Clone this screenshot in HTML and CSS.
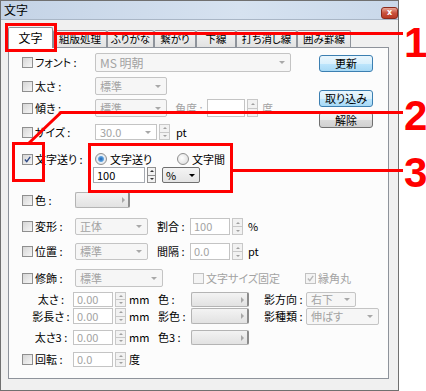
FILE: index.html
```html
<!DOCTYPE html>
<html lang="ja">

<head>
  <meta charset="UTF-8">
  <title>文字</title>
  <link rel="stylesheet" href="styles.css">
</head>

<body>
  <div id="window">
    <div class="titlebar">
      <span class="title">文字</span>
      <span class="close">x</span>
    </div>

    <div class="client">
      <div class="tabs">
        <span class="tab active t-moji">文字</span>
        <span class="tab t-kumi">組版処理</span>
        <span class="tab t-furi">ふりがな</span>
        <span class="tab t-tsuna">繋がり</span>
        <span class="tab t-kasen">下線</span>
        <span class="tab t-uchi">打ち消し線</span>
        <span class="tab t-kakomi">囲み罫線</span>
      </div>

      <div class="panel">
        <div class="top">
          <div class="rows">
            <div class="row r-font">
              <span class="cb"></span>
              <span class="lbl">フォント :</span>
              <span class="combo c-font">MS 明朝<i class="arrow"></i></span>
            </div>
            <div class="row r-bold">
              <span class="cb"></span>
              <span class="lbl">太さ :</span>
              <span class="combo c-short">標準<i class="arrow"></i></span>
            </div>
            <div class="row r-slant">
              <span class="cb"></span>
              <span class="lbl">傾き :</span>
              <span class="combo c-short">標準<i class="arrow"></i></span>
              <span class="lbl dim l-angle">角度 :</span>
              <span class="field f-angle"></span>
              <span class="spin"><i class="up"></i><i class="down"></i></span>
              <span class="unit dim">度</span>
            </div>
            <div class="row r-size">
              <span class="cb"></span>
              <span class="lbl">サイズ :</span>
              <span class="combo c-edit">30.0<i class="arrow"></i></span>
              <span class="spin"><i class="up"></i><i class="down"></i></span>
              <span class="unit u-pt">pt</span>
            </div>
          </div>
          <div class="buttons">
            <span class="btn hot b-update">更新</span>
            <span class="btn hot b-import">取り込み</span>
            <span class="btn b-clear">解除</span>
          </div>
        </div>

        <div class="row r-track">
          <span class="cb on"><svg viewBox="0 0 11 11"><path d="M2.3 5.6 L4.6 8.2 L8.8 2.4"/></svg></span>
          <span class="lbl">文字送り :</span>
          <span class="choice ch-first"><span class="radio on"></span>文字送り</span>
          <span class="choice"><span class="radio"></span>文字間</span>
        </div>
        <div class="row r-value">
          <span class="field f-value live">100</span>
          <span class="spin s-value"><i class="up"></i><i class="down"></i></span>
          <span class="select">%<i class="arrow"></i></span>
        </div>

        <div class="row r-color">
          <span class="cb"></span>
          <span class="lbl sm">色 :</span>
          <span class="swatch s-main"><i class="arrow"></i></span>
        </div>
        <div class="row r-shape">
          <span class="cb"></span>
          <span class="lbl sm">変形 :</span>
          <span class="combo c-mid">正体<i class="arrow"></i></span>
          <span class="lbl l-mid">割合 :</span>
          <span class="field">100</span>
          <span class="spin"><i class="up"></i><i class="down"></i></span>
          <span class="unit u-pct">%</span>
        </div>
        <div class="row r-pos">
          <span class="cb"></span>
          <span class="lbl sm">位置 :</span>
          <span class="combo c-mid">標準<i class="arrow"></i></span>
          <span class="lbl l-mid">間隔 :</span>
          <span class="field">0.0</span>
          <span class="spin"><i class="up"></i><i class="down"></i></span>
          <span class="unit u-pct">pt</span>
        </div>
        <div class="row r-deco">
          <span class="cb"></span>
          <span class="lbl sm">修飾 :</span>
          <span class="combo c-long">標準<i class="arrow"></i></span>
          <span class="choice ch-fixed"><span class="cb off"></span>文字サイズ固定</span>
          <span class="choice dim"><span class="cb off on"><svg viewBox="0 0 11 11"><path d="M2.3 5.6 L4.6 8.2 L8.8 2.4"/></svg></span>縁角丸</span>
        </div>

        <div class="row sub r-width">
          <span class="lbl sub-lbl">太さ :</span>
          <span class="field">0.00</span>
          <span class="spin"><i class="up"></i><i class="down"></i></span>
          <span class="unit u-mm">mm</span>
          <span class="lbl l-mid">色 :</span>
          <span class="swatch"><i class="arrow"></i></span>
          <span class="lbl l-shadow">影方向 :</span>
          <span class="combo c-dir">右下<i class="arrow"></i></span>
        </div>
        <div class="row sub r-len">
          <span class="lbl sub-lbl">影長さ :</span>
          <span class="field">0.00</span>
          <span class="spin"><i class="up"></i><i class="down"></i></span>
          <span class="unit u-mm">mm</span>
          <span class="lbl l-mid">影色 :</span>
          <span class="swatch"><i class="arrow"></i></span>
          <span class="lbl l-shadow">影種類 :</span>
          <span class="combo c-kind">伸ばす<i class="arrow"></i></span>
        </div>
        <div class="row sub r-width3">
          <span class="lbl sub-lbl">太さ3 :</span>
          <span class="field">0.00</span>
          <span class="spin"><i class="up"></i><i class="down"></i></span>
          <span class="unit u-mm">mm</span>
          <span class="lbl l-mid">色3 :</span>
          <span class="swatch"><i class="arrow"></i></span>
        </div>
        <div class="row r-rot">
          <span class="cb"></span>
          <span class="lbl l-rot">回転 :</span>
          <span class="field">0.0</span>
          <span class="spin"><i class="up"></i><i class="down"></i></span>
          <span class="unit u-mm">度</span>
        </div>
      </div>
    </div>
  </div>

  <svg class="notes" width="426" height="391" viewBox="0 0 426 391">
    <g fill="none" stroke="#f00" stroke-width="3">
      <rect x="6.5" y="24.5" width="49" height="26" />
      <path d="M56 33.5 H403" />
      <rect x="13.5" y="143.5" width="30" height="37" />
      <path d="M29 143 L61 112.5 H403" />
      <rect x="89.5" y="144.5" width="142" height="47" />
      <path d="M233 170.5 H403" />
    </g>
    <g class="digits" fill="#f00">
      <text x="404" y="57">1</text>
      <text x="404" y="130">2</text>
      <text x="404" y="187">3</text>
    </g>
  </svg>
</body>

</html>
```

FILE: styles.css
```css
html,
body {
  margin: 0;
  padding: 0;
}

body {
  position: relative;
  width: 426px;
  height: 391px;
  overflow: hidden;
  background: #fff;
  color: #000;
  font-family: "Noto Sans CJK JP", "Noto Sans", sans-serif;
  font-size: 11px;
  line-height: 1;
  font-feature-settings: "palt";
}

#window {
  display: flex;
  flex-direction: column;
  box-sizing: border-box;
  width: 399px;
  height: 391px;
  border: 1px solid #707070;
  background: #f0f0f0;
}

.titlebar {
  display: flex;
  justify-content: space-between;
  height: 18px;
  padding-left: 3px;
  background: linear-gradient(90deg, #c4d3e6, #d6e2f0 60%, #c9d8ea);

  >.title {
    align-self: center;
    font-size: 12px;
  }

  >.close {
    align-self: flex-end;
    display: flex;
    align-items: center;
    justify-content: center;
    box-sizing: border-box;
    width: 17px;
    height: 12px;
    border: 1px solid #8a2a1c;
    border-radius: 3px;
    background: linear-gradient(#e8a798, #c9523d 50%, #b93a24);
    color: #fff;
    font-family: "DejaVu Sans", sans-serif;
    font-size: 8px;
    font-weight: bold;
  }
}

.client {
  flex: 1;
  border-top: 1px solid #a9b6c6;
  padding: 7px 0 0 7px;
}

/* tab strip */
.tabs {
  display: flex;
  align-items: flex-end;
  height: 20px;

  >.tab {
    display: flex;
    align-items: center;
    justify-content: center;
    box-sizing: border-box;
    height: 17px;
    border: 1px solid #8e939b;
    border-bottom: none;
    border-radius: 2px 2px 0 0;
    background: linear-gradient(#f4f4f4, #e2e2e2);
    font-size: 10.5px;
    white-space: nowrap;
  }

  >.active {
    position: relative;
    z-index: 1;
    height: 21px;
    margin-bottom: -1px;
    background: #fff;
    font-size: 12px;
  }
}

.t-moji { width: 45px; }
.t-kumi { width: 54px; }
.t-furi { width: 47px; }
.t-tsuna { width: 42px; }
.t-kasen { width: 40px; }
.t-uchi { width: 61px; }
.t-kakomi { width: 54px; }

.panel {
  box-sizing: border-box;
  width: 381px;
  height: 332px;
  padding-left: 13px;
  border: 1px solid #8e939b;
  background: #fcfcfc;
}

.top {
  display: flex;

  >.rows {
    width: 296px;
  }
}

.buttons {
  display: flex;
  flex-direction: column;
  padding-top: 7px;
  margin-left: 1px;

  >.btn {
    display: flex;
    align-items: center;
    justify-content: center;
    box-sizing: border-box;
    width: 54px;
    height: 17px;
    border: 1px solid #707070;
    border-radius: 3px;
    background: linear-gradient(#f4f4f4, #ebebeb 50%, #dcdcdc 50%, #d0d0d0);
    font-size: 11px;
  }

  >.hot {
    border-color: #3c7fb1;
    background: linear-gradient(#eaf6fd, #d9f0fc 50%, #bee6fd 50%, #a7d9f5);
  }

  >.b-import { margin-top: 18px; }
  >.b-clear { margin-top: 5px; height: 16px; }
}

/* rows */
.row {
  display: flex;
  align-items: center;
  white-space: nowrap;
}

.r-font { margin-top: 5px; height: 19px; }
.r-bold { margin-top: 5px; height: 18px; }
.r-slant { margin-top: 4px; height: 18px; }
.r-size { margin-top: 7px; height: 16px; }
.r-track { margin-top: 12px; height: 14px; }
.r-value { margin-top: 1px; height: 16px; padding-left: 71px; }
.r-color { margin-top: 9px; height: 16px; }
.r-shape { margin-top: 10px; height: 17px; }
.r-pos { margin-top: 8px; height: 17px; }
.r-deco { margin-top: 9px; height: 18px; }
.r-width { margin-top: 5px; height: 15px; }
.r-len { margin-top: 1px; height: 16px; }
.r-width3 { margin-top: 6px; height: 15px; }
.r-rot { margin-top: 7px; height: 15px; }

.lbl {
  flex: none;
  width: 60px;
}

.lbl.sm { width: 40px; }
.l-angle { width: 32px; margin-left: 8px; }
.l-mid { width: 33px; margin-left: 0; }
.r-shape .l-mid,
.r-pos .l-mid { margin-left: 9px; }
.l-shadow { width: 42px; margin-left: 15px; }
.l-rot { width: 38px; }

.sub-lbl {
  width: 44px;
  margin-left: 7px;
  text-align: center;
}

.dim { color: #a3a3a3; }

.unit { margin-left: 4px; }
.u-pt { margin-left: 6px; }
.u-pct { margin-left: 5px; }
.u-mm { width: 29px; margin-left: 3px; }

/* check boxes and radios */
.cb {
  flex: none;
  box-sizing: border-box;
  width: 11px;
  height: 11px;
  margin-right: 2px;
  border: 1px solid #8f8f8f;
  background: linear-gradient(135deg, #d6d6d6, #f6f6f6);

  >svg {
    display: block;
    width: 9px;
    height: 9px;
  }

  path {
    fill: none;
    stroke: #2f4a85;
    stroke-width: 1.7;
  }
}

.cb.off {
  border-color: #c2c2c2;
  background: #f4f4f4;
}

.cb.off path { stroke: #b8b8b8; }

.choice {
  display: flex;
  align-items: center;
}

.ch-first { width: 82px; }

.ch-fixed {
  width: 112px;
  margin-left: 30px;
  color: #a3a3a3;
}

.radio {
  box-sizing: border-box;
  width: 12px;
  height: 12px;
  margin-right: 3px;
  border: 1px solid #8f8f8f;
  border-radius: 50%;
  background: radial-gradient(circle at 40% 40%, #fff, #d8d8d8);
}

.radio.on {
  background: radial-gradient(circle, #1d5fae 0, #5fa4e0 2.5px, #e7eef6 3.5px, #d8d8d8);
}

/* form controls */
.combo,
.select,
.field,
.swatch {
  flex: none;
  display: flex;
  align-items: center;
  box-sizing: border-box;
  height: 100%;
}

.combo {
  padding-left: 4px;
  border: 1px solid #c4c4c4;
  border-radius: 2px;
  background: #f6f6f6;
  color: #a3a3a3;
}

.c-font { width: 196px; font-size: 12px; }
.c-short { width: 72px; }
.c-edit { width: 62px; border-radius: 0; background: #fff; }
.c-mid { width: 73px; }
.c-long { width: 88px; }
.c-dir { width: 50px; }
.c-kind { width: 73px; }
.r-len .c-kind { height: 17px; }

.arrow {
  margin-left: auto;
  margin-right: 5px;
  border-top: 3px solid #a8a8a8;
  border-left: 3px solid transparent;
  border-right: 3px solid transparent;
}

.field {
  width: 40px;
  padding-left: 3px;
  border: 1px solid #c4c4c4;
  background: #fff;
  color: #a3a3a3;
}

.f-angle { width: 38px; }
.f-value { width: 52px; }
.live { color: #000; border-color: #a5a9b0; }

.spin {
  flex: none;
  display: flex;
  flex-direction: column;
  width: 11px;
  height: 100%;
  margin-left: 2px;

  >i {
    flex: 1;
    display: flex;
    align-items: center;
    justify-content: center;
    border: 1px solid #c8c8c8;
    background: #f2f2f2;
  }

  >i+i { border-top: none; }

  >.up::after {
    content: "";
    border-bottom: 2px solid #a0a0a0;
    border-left: 2px solid transparent;
    border-right: 2px solid transparent;
  }

  >.down::after {
    content: "";
    border-top: 2px solid #a0a0a0;
    border-left: 2px solid transparent;
    border-right: 2px solid transparent;
  }
}

.s-value {
  width: 9px;

  >i { border-color: #8f8f8f; }
  >.up::after { border-bottom-color: #333; }
  >.down::after { border-top-color: #333; }
}

.select {
  width: 38px;
  margin-left: 6px;
  padding-left: 3px;
  border: 1px solid #707070;
  border-radius: 2px;
  background: linear-gradient(#f4f4f4, #e4e4e4);

  >.arrow {
    margin-right: 4px;
    border-top-color: #000;
  }
}

.swatch {
  width: 58px;
  border: 1px solid #b4b4b4;
  border-right: 2px solid #8c8c8c;
  border-radius: 2px;
  background: linear-gradient(#f3f3f3, #e2e2e2);

  >.arrow {
    margin-right: 3px;
    border-top: 3px solid transparent;
    border-bottom: 3px solid transparent;
    border-left: 3px solid #a8a8a8;
    border-right: none;
  }
}

.s-main { width: 55px; }

/* annotation overlay */
.notes {
  position: absolute;
  top: 0;
  left: 0;
  pointer-events: none;

  .digits {
    font-family: "Liberation Sans", Arial, sans-serif;
    font-size: 42px;
    font-weight: bold;
  }
}
```
